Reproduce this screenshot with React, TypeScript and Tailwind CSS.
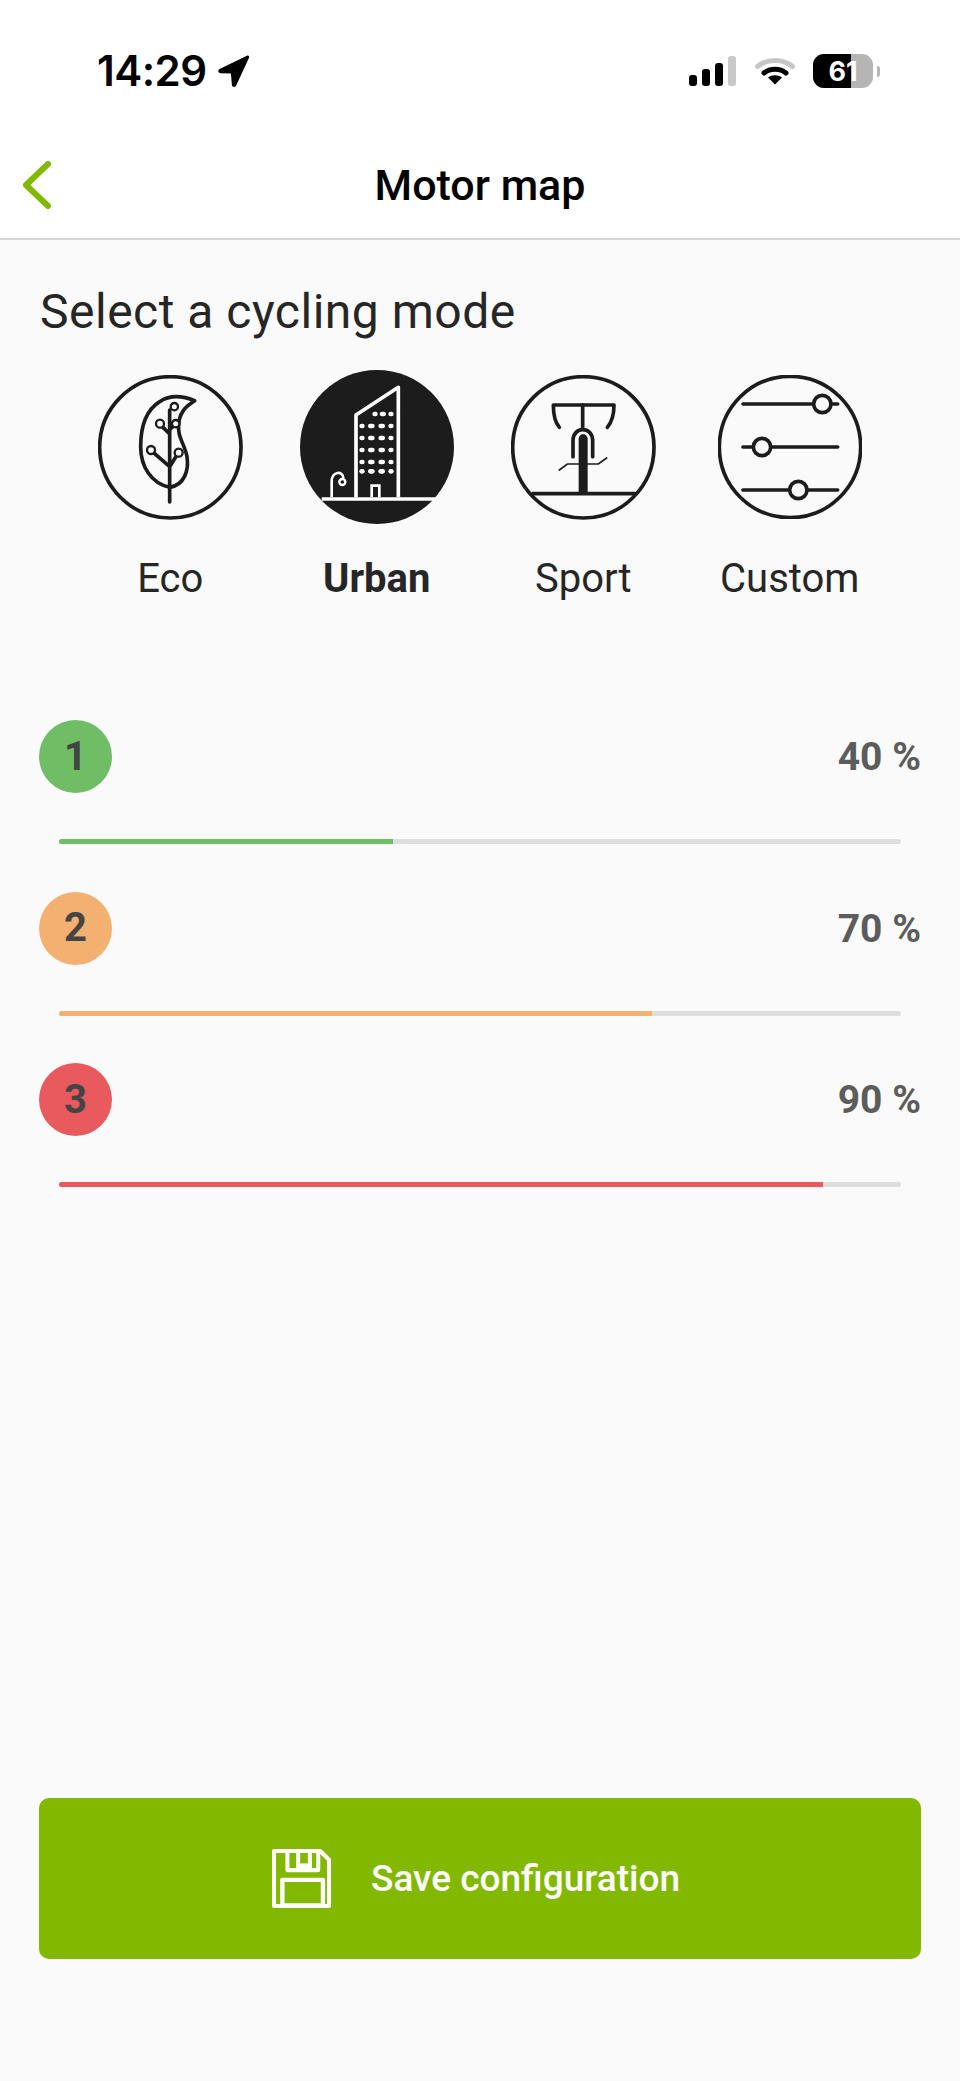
const levels = [
  { n: 1, pct: 40, fill: 39.7, color: "bg-[#6fbe66]" },
  { n: 2, pct: 70, fill: 70.4, color: "bg-[#f4b071]" },
  { n: 3, pct: 90, fill: 90.7, color: "bg-[#e85a5e]" },
];

function EcoIcon() {
  return (
    <svg viewBox="55 75 435 435" className="w-[145px] h-[145px]" fill="none" stroke="#1c1c1c" strokeWidth="11" strokeLinecap="round">
      <circle cx="272" cy="292" r="212" />
      <path d="M345 152C310 138 270 135 240 155C200 180 183 230 183 290C183 350 215 400 270 412C315 405 328 360 322 320C315 280 290 260 298 215C303 180 325 165 345 152Z" strokeLinejoin="round" />
      <path d="M270 456V180M270 252L250 232M270 238L282 228M270 350L224 310M270 350L290 318" />
      <g fill="#fafafa" strokeWidth="7">
        <circle cx="284" cy="170" r="11" />
        <circle cx="241" cy="221" r="12" />
        <circle cx="288" cy="221" r="11" />
        <circle cx="214" cy="300" r="12" />
        <circle cx="297" cy="308" r="12" />
      </g>
    </svg>
  );
}

function UrbanIcon() {
  const rows = [228, 264, 300, 336, 364];
  return (
    <svg viewBox="660 60 462 462" className="w-[154px] h-[154px]" fill="none">
      <circle cx="891" cy="291" r="231" fill="#1c1c1c" />
      <path d="M828 442V195L955 112V442" stroke="#fff" strokeWidth="11" strokeLinejoin="round" />
      <path d="M725 447H1068" stroke="#fff" strokeWidth="10" />
      <path d="M875 442V407H898V442" stroke="#fff" strokeWidth="8" />
      <path d="M755 442V395C755 362 790 362 790 385" stroke="#fff" strokeWidth="8" />
      <circle cx="787" cy="396" r="9" stroke="#fff" strokeWidth="7" />
      <g fill="#fff">
        <rect x="877" y="185" width="16" height="14" rx="7" />
        <rect x="899" y="185" width="19" height="14" rx="7" />
        <rect x="925" y="185" width="16" height="14" rx="7" />
        {rows.map((y) => (
          <g key={y}>
            <rect x="838" y={y - 7} width="16" height="14" rx="7" />
            <rect x="864" y={y - 7} width="20" height="14" rx="7" />
            <rect x="895" y={y - 7} width="20" height="14" rx="7" />
            <rect x="925" y={y - 7} width="16" height="14" rx="7" />
          </g>
        ))}
      </g>
    </svg>
  );
}

function SportIcon() {
  return (
    <svg viewBox="93 75 435 435" className="w-[145px] h-[145px]" fill="none" stroke="#1c1c1c" strokeWidth="11" strokeLinecap="round">
      <circle cx="310" cy="292" r="212" />
      <path d="M238 232C226 218 220 195 220 165H402C402 195 394 218 382 232" strokeLinejoin="round" />
      <path d="M308 165V235" />
      <path d="M279 320V272C279 228 338 228 338 272V320" />
      <path d="M296 430V268C296 248 323 248 323 268V430Z" fill="#1c1c1c" stroke="none" />
      <path d="M238 360L262 342H355L380 324" strokeWidth="5" />
      <path d="M155 431H468" strokeLinecap="butt" />
    </svg>
  );
}

function CustomIcon() {
  return (
    <svg viewBox="713 75 432 432" className="w-[144px] h-[144px]" fill="none" stroke="#1c1c1c" strokeWidth="11" strokeLinecap="round">
      <circle cx="929" cy="291" r="212" />
      <path d="M788 162H1072M788 291H1072M788 420H1072" />
      <g fill="#fafafa">
        <circle cx="1026" cy="162" r="26" />
        <circle cx="845" cy="291" r="26" />
        <circle cx="954" cy="420" r="26" />
      </g>
    </svg>
  );
}

function SaveIcon() {
  return (
    <svg viewBox="96 208 176 176" className="w-[59px] h-[59px]" fill="none" stroke="#fff" strokeWidth="12" strokeLinejoin="round">
      <path d="M102 214H240L266 240V378H102Z" />
      <rect x="127" y="300" width="121" height="76" strokeWidth="13" />
      <path d="M142 214V271H234V214" />
      <path d="M174 214V271M209 214V271" />
      <path d="M178 258H206" strokeWidth="14" />
    </svg>
  );
}

const modes = [
  { label: "Eco", icon: <EcoIcon /> },
  { label: "Urban", icon: <UrbanIcon />, active: true },
  { label: "Sport", icon: <SportIcon /> },
  { label: "Custom", icon: <CustomIcon /> },
];

export default function App() {
  return (
    <div className="w-[960px] h-[2081px] flex flex-col bg-[#fafafa] font-['Roboto',sans-serif] overflow-hidden">
      <header className="bg-white border-b-2 border-[#d6d6d6] h-[240px] shrink-0">
        <div className="h-[142px] flex items-center justify-between">
          <div className="flex items-center gap-[11px] pl-[97px]">
            <span className="text-[42px] font-semibold text-black leading-none font-['Inter',sans-serif] tracking-[-0.5px]">14:29</span>
            <svg viewBox="0 0 30 31" className="w-[31px] h-[32px]">
              <path d="M28 .8L1.5 13.5C-.5 14.6 0 17.5 2.5 17.7L12.5 18L13.4 28.8C13.7 31.2 16.6 31.7 17.6 29.6L29.8 3.2C30.6 1.4 29.6 0 28 .8Z" fill="#000" />
            </svg>
          </div>
          <div className="flex items-center pr-[80px]">
            <div className="flex items-end gap-[5px] h-[30px]">
              <span className="w-[8px] h-[11px] rounded-[3px] bg-black" />
              <span className="w-[8px] h-[17px] rounded-[3px] bg-black" />
              <span className="w-[8px] h-[23px] rounded-[3px] bg-black" />
              <span className="w-[8px] h-[30px] rounded-[3px] bg-[#c9c9c9]" />
            </div>
            <svg viewBox="0 0 40 30" className="w-[40px] h-[30px] ml-[19px]" fill="none" strokeLinecap="round">
              <path d="M2.5 10.5C12 2.5 28 2.5 37.5 10.5" stroke="#c6c6c6" strokeWidth="5" />
              <path d="M9 17C15 12 25 12 31 17" stroke="#000" strokeWidth="5" />
              <path d="M13 21.5L20 28.5L27 21.5C23 18.5 17 18.5 13 21.5Z" fill="#000" />
            </svg>
            <div className="relative ml-[18px] w-[60px] h-[34px] rounded-[11px] bg-[#b5b5b5] overflow-hidden">
              <div className="h-full w-[38px] bg-black" />
              <span className="absolute inset-0 flex items-center justify-center text-[27px] font-bold leading-none text-white font-['Inter',sans-serif]">61</span>
            </div>
            <span className="ml-[4px] w-[3px] h-[11px] rounded-r-full bg-[#b5b5b5]" />
          </div>
        </div>
        <div className="grid grid-cols-[1fr_auto_1fr] items-center h-[86px] pl-[21px]">
          <svg viewBox="0 0 30 48" className="w-[30px] h-[48px]" fill="none" stroke="#82b900" strokeWidth="6" strokeLinecap="round" strokeLinejoin="round">
            <path d="M27 3L5 24L27 45" />
          </svg>
          <h1 className="text-[43px] font-medium text-black leading-none mr-[21px]">Motor map</h1>
          <span />
        </div>
      </header>

      <main className="flex-1 flex flex-col px-[40px]">
        <h2 className="mt-[48px] text-[48px] leading-[48px] text-[#262626] tracking-[0.5px]">Select a cycling mode</h2>
        <div className="mt-[34px] grid grid-cols-4 w-[826px] ml-[27px]">
          {modes.map((m) => (
            <div key={m.label} className="flex flex-col items-center">
              <div className="h-[154px] flex items-center justify-center">{m.icon}</div>
              <span className={`mt-[33px] text-[40px] leading-[44px] text-[#262626] ${m.active ? "font-bold" : "font-normal"}`}>{m.label}</span>
            </div>
          ))}
        </div>

        <div className="mt-[119px] flex flex-col gap-[47.5px] -mx-[1px]">
          {levels.map((l) => (
            <div key={l.n} className="flex flex-col">
              <div className="flex items-center justify-between h-[73px]">
                <span className={`w-[73px] h-[73px] rounded-full flex items-center justify-center text-[40px] font-bold text-[#444] ${l.color}`}>{l.n}</span>
                <span className="pt-[2px] text-[39px] font-bold text-[#5c5c5c]">{l.pct} %</span>
              </div>
              <div className="mt-[46px] mx-[20px] h-[5px] rounded-full bg-[#dedede] overflow-hidden">
                <div className={`h-full ${l.color}`} style={{ width: `${l.fill}%` }} />
              </div>
            </div>
          ))}
        </div>

        <button className="mt-auto mb-[122px] -mx-[1px] h-[161px] rounded-[10px] bg-[#82b900] flex items-center justify-center gap-[40px] pr-[8px] text-white">
          <SaveIcon />
          <span className="text-[37px] font-medium">Save configuration</span>
        </button>
      </main>
    </div>
  );
}
